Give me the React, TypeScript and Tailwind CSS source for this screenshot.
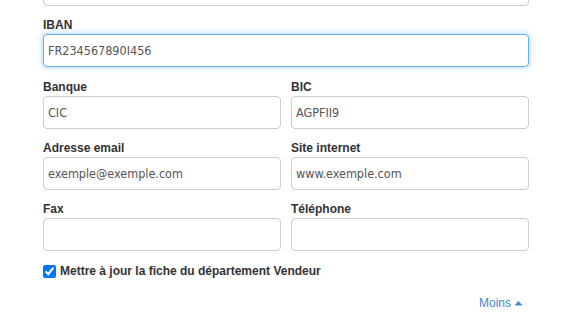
import React, { useState } from 'react'

const inputCls =
  "block w-full h-[33px] rounded-[4px] border border-[#cccccc] bg-white px-[4px] text-[12.5px] text-[#555555] outline-none [font-family:'DejaVu_Sans_Condensed','DejaVu_Sans',sans-serif]"

function Field({ label, value, focused }: { label: string; value?: string; focused?: boolean }) {
  return (
    <div className="flex flex-col">
      <label className="text-[12px] leading-[15px] font-bold text-[#333333] mb-[1px]">{label}</label>
      <input
        className={
          focused
            ? inputCls + " !border-[#66afe9] shadow-[0_0_6px_rgba(102,175,233,0.6)]"
            : inputCls
        }
        defaultValue={value}
        autoFocus={focused}
      />
    </div>
  )
}

export default function App() {
  const [checked, setChecked] = useState(true)
  return (
    <div className="w-[577px] h-[325px] overflow-hidden bg-white [font-family:'Liberation_Sans',Arial,sans-serif]">
      <div className="ml-[43px] w-[486px] flex flex-col">
        <div className="-mt-[27px] h-[33px] rounded-[4px] border border-[#cccccc]" />
        <div className="mt-[12px]">
          <Field label="IBAN" value="FR234567890I456" focused />
        </div>
        <div className="mt-[13px] grid grid-cols-2 gap-x-[10px] gap-y-[12px]">
          <Field label="Banque" value="CIC" />
          <Field label="BIC" value="AGPFII9" />
          <Field label="Adresse email" value="exemple@exemple.com" />
          <Field label="Site internet" value="www.exemple.com" />
          <Field label="Fax" />
          <Field label="Téléphone" />
        </div>
        <label className="mt-[13px] flex items-center gap-[4px] text-[12px] font-bold text-[#333333] leading-[15px]">
          <input
            type="checkbox"
            checked={checked}
            onChange={() => setChecked(!checked)}
            className="w-[13px] h-[13px] m-0"
          />
          Mettre à jour la fiche du département Vendeur
        </label>
        <div className="mt-[15px] flex justify-end pr-[6px]">
          <a className="flex items-center gap-[3px] text-[12px] text-[#4a87c6] cursor-pointer">
            Moins
            <svg width="9" height="6" viewBox="0 0 9 6" fill="currentColor">
              <path d="M0.5 5.5 L4.5 1 L8.5 5.5 Z" />
            </svg>
          </a>
        </div>
      </div>
    </div>
  )
}
